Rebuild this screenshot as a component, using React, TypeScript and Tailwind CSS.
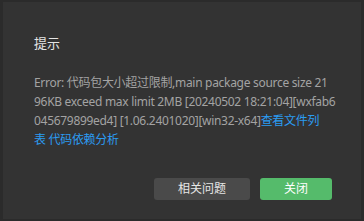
export default function App() {
  return (
    <div className="w-[364px] h-[221px] bg-[#2b2b2b] overflow-hidden">
      <div
        className="ml-[3px] mt-[2px] w-[358px] h-[217px] bg-[#333333] flex flex-col px-[31px] pt-[31px]"
        style={{ fontFamily: '"Noto Sans", "Noto Sans CJK SC", sans-serif' }}
      >
        <div className="text-[13px] leading-[20px] text-[#e4e4e4]">提示</div>
        <p className="mt-[20px] w-[300px] text-[12px] leading-[19px] tracking-[-0.3px] text-[#a3a3a3] whitespace-nowrap">
          Error: 代码包大小超过限制,main package source size 21
          <br />
          96KB exceed max limit 2MB [20240502 18:21:04][wxfab6
          <br />
          045679899ed4] [1.06.2401020][win32-x64]
          <span className="text-[#2b9cf2]">查看文件列</span>
          <br />
          <span className="text-[#2b9cf2]">表 代码依赖分析</span>
        </p>
        <div className="mt-auto mb-[19px] flex justify-end gap-[10px] mr-[-2px]">
          <button className="w-[96px] h-[22px] rounded-[3px] bg-[#4a4a4a] text-[12px] text-[#e6e6e6]">
            相关问题
          </button>
          <button className="w-[72px] h-[22px] rounded-[3px] bg-[#55bb6b] text-[12px] text-white">
            关闭
          </button>
        </div>
      </div>
    </div>
  );
}
